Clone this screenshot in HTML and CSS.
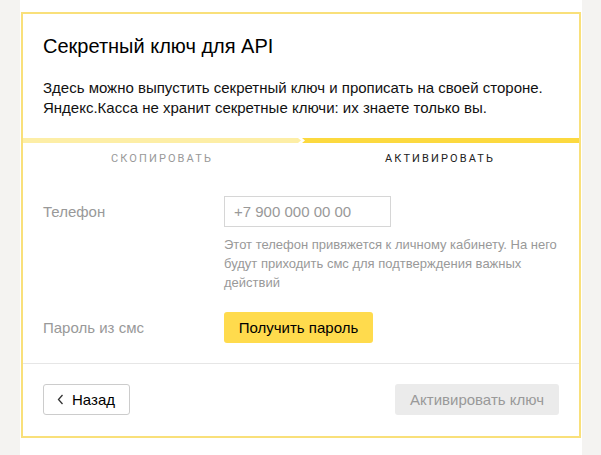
FILE: index.html
```html
<!DOCTYPE html>
<html lang="ru">
<head>
<meta charset="utf-8">
<link rel="stylesheet" href="styles.css">
</head>
<body>
<div class="page">
  <div class="card">
    <div class="head">
      <h1 class="title">Секретный ключ для API</h1>
      <p class="desc">Здесь можно выпустить секретный ключ и прописать на своей стороне.<br>Яндекс.Касса не хранит секретные ключи: их знаете только вы.</p>
    </div>
    <div class="steps">
      <div class="step done">
        <div class="bar"></div>
        <div class="label">Скопировать</div>
      </div>
      <div class="step active">
        <div class="bar"></div>
        <div class="label">Активировать</div>
      </div>
    </div>
    <div class="form">
      <div class="row">
        <div class="lbl">Телефон</div>
        <div class="ctl">
          <input class="input" type="text" placeholder="+7 900 000 00 00">
          <p class="hint">Этот телефон привяжется к личному кабинету. На него будут приходить смс для подтверждения важных действий</p>
        </div>
      </div>
      <div class="row row-sms">
        <div class="lbl">Пароль из смс</div>
        <div class="ctl">
          <button class="btn btn-yellow" type="button">Получить пароль</button>
        </div>
      </div>
    </div>
    <div class="foot">
      <button class="btn btn-back" type="button"><svg class="chev" width="7" height="11" viewBox="0 0 7 11"><path d="M5.5 1 L1.5 5.5 L5.5 10" fill="none" stroke="#333" stroke-width="1.3"/></svg>Назад</button>
      <button class="btn btn-dis" type="button">Активировать ключ</button>
    </div>
  </div>
</div>
</body>
</html>
```

FILE: styles.css
```css
* { box-sizing: border-box; }
html, body { margin: 0; padding: 0; }
body {
  background: #f4f3f1;
  font-family: "Liberation Sans", Arial, sans-serif;
  color: #000;
}
.page {
  margin-left: 20px;
  width: 562px;
  background: #fff;
  padding: 12px 1px 17px 1px;
  min-height: 455px;
}
.card {
  border: 2px solid #f9e07a;
  background: #fff;
}
.head {
  padding: 20px 20px 0 20px;
}
.title {
  margin: 0;
  font-size: 20px;
  line-height: 24px;
  font-weight: normal;
  color: #000;
}
.desc {
  margin: 20px 0 0 0;
  font-size: 15px;
  line-height: 20px;
  color: #111;
}
.steps {
  display: flex;
  margin-top: 20px;
}
.step { flex: 1 1 0; }
.bar { height: 5px; }
.step.done .bar {
  background: #fdeea6;
  clip-path: polygon(0 0, calc(100% - 3px) 0, 100% 50%, calc(100% - 3px) 100%, 0 100%);
}
.step.active .bar {
  background: #fcd93f;
  clip-path: polygon(0 0, 100% 0, 100% 100%, 0 100%, 3px 50%);
  margin-left: 1px;
}
.label {
  text-align: center;
  text-transform: uppercase;
  font-family: Roboto, "Liberation Sans", sans-serif;
  font-size: 11px;
  letter-spacing: 2.1px;
  line-height: 14px;
  padding-top: 9px;
}
.step.done .label { color: #999; }
.step.active .label { color: #222; }
.form {
  padding: 30px 20px 20px 20px;
  border-bottom: 1px solid #e6e6e6;
}
.row {
  display: flex;
  align-items: flex-start;
}
.lbl {
  width: 181px;
  flex: none;
  font-size: 15px;
  line-height: 31px;
  color: #999;
}
.ctl { flex: 1; }
.input {
  display: block;
  width: 167px;
  height: 31px;
  border: 1px solid #d6d6d6;
  padding: 0 9px;
  font-family: "Liberation Sans", Arial, sans-serif;
  font-size: 15px;
  color: #000;
  outline: none;
}
.input::placeholder { color: #999; }
.hint {
  margin: 8px 0 0 0;
  font-size: 13px;
  line-height: 19px;
  color: #999;
  width: 336px;
}
.row-sms { margin-top: 20px; }
.btn {
  font-family: "Liberation Sans", Arial, sans-serif;
  font-size: 15px;
  height: 31px;
  border-radius: 3px;
  padding: 0 14px;
  cursor: pointer;
}
.btn-yellow {
  background: #ffdb4d;
  border: none;
  color: #000;
  width: 149px;
  padding: 0;
}
.foot {
  display: flex;
  justify-content: space-between;
  padding: 20px 20px 21px 20px;
}
.btn-back {
  background: #fff;
  border: 1px solid #ccc;
  color: #000;
  display: inline-flex;
  align-items: center;
  gap: 8px;
  padding: 0 13px;
  width: 87px;
}
.chev { display: block; }
.btn-dis {
  background: #ebebeb;
  border: none;
  color: #999;
  width: 164px;
  padding: 0;
}
```
